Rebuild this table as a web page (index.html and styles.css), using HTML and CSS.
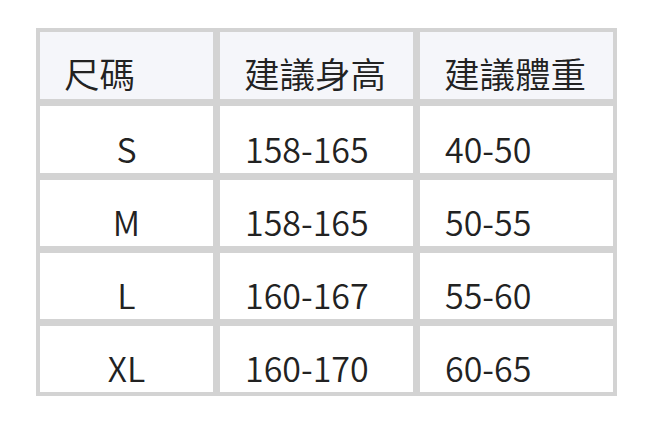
FILE: index.html
```html
<!DOCTYPE html>
<html lang="zh-Hant">
<head>
<meta charset="utf-8">
<title>尺碼表</title>
<link rel="stylesheet" href="styles.css">
</head>
<body>
<div class="size-table">
  <div class="cell head">尺碼</div>
  <div class="cell head">建議身高</div>
  <div class="cell head">建議體重</div>

  <div class="cell size">S</div>
  <div class="cell">158-165</div>
  <div class="cell">40-50</div>

  <div class="cell size">M</div>
  <div class="cell">158-165</div>
  <div class="cell">50-55</div>

  <div class="cell size">L</div>
  <div class="cell">160-167</div>
  <div class="cell">55-60</div>

  <div class="cell size">XL</div>
  <div class="cell">160-170</div>
  <div class="cell">60-65</div>
</div>
</body>
</html>
```

FILE: styles.css
```css
html, body {
  margin: 0;
  padding: 0;
  background: #ffffff;
}

body {
  font-family: "Noto Sans CJK TC", "Noto Sans", sans-serif;
  color: #222222;
}

.size-table {
  margin: 28px 0 0 36px;
  width: 581px;
  box-sizing: border-box;
  display: grid;
  grid-template-columns: 173px 193px 193px;
  grid-template-rows: 67px 67px 66px 66px 66px;
  column-gap: 7px;
  row-gap: 7px;
  padding: 4px;
  background: #d3d3d3;
}

.cell {
  background: #ffffff;
  display: flex;
  align-items: flex-end;
  padding-left: 25px;
  font-size: 34px;
  font-weight: 350;
  line-height: 1.45;
}

.head {
  background: #f5f6fa;
  font-size: 35.5px;
  padding-left: 24px;
  padding-bottom: 1px;
}

.size {
  justify-content: center;
  padding-left: 0;
}
```
